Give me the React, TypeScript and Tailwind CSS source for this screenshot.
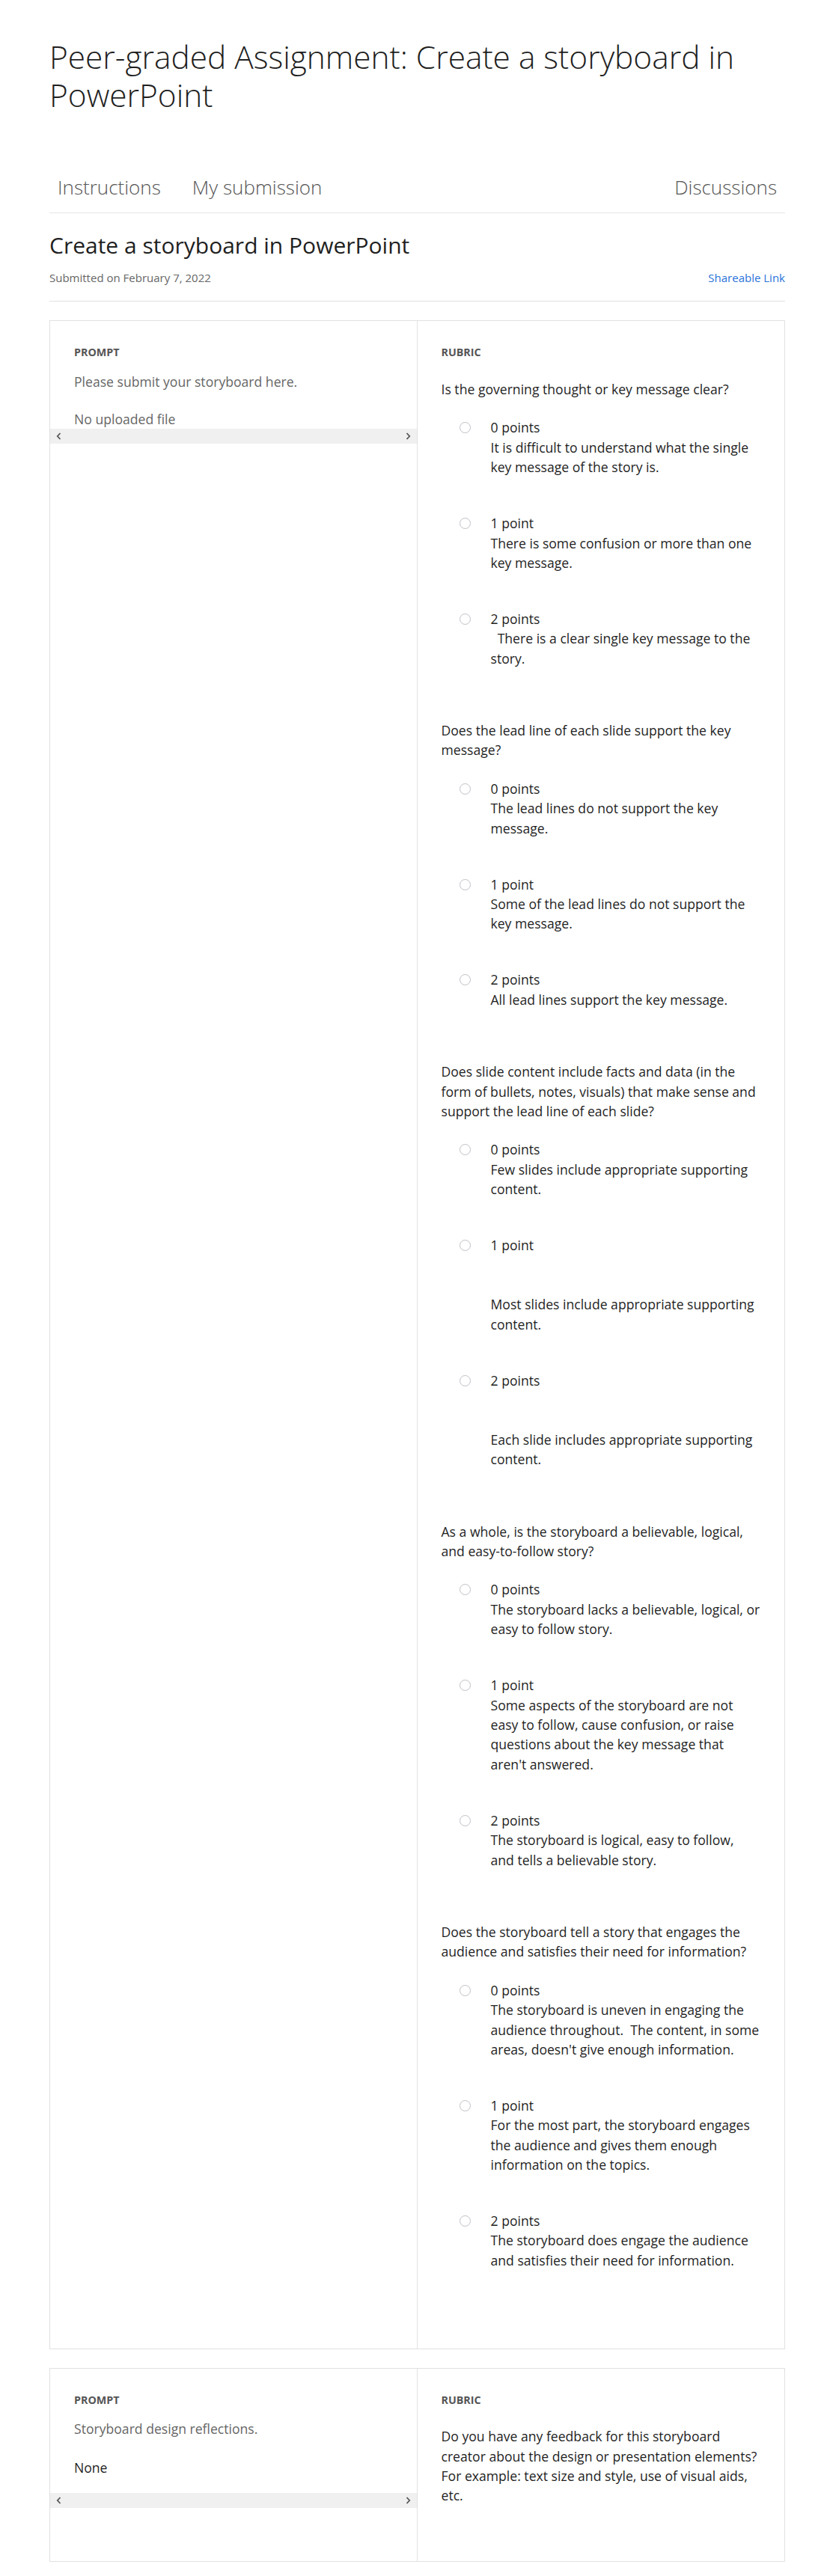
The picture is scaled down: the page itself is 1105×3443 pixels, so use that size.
import React from 'react';

type Option = { label: string; lines: string[] };
type Question = { title: string[]; options: Option[] };

const questions: Question[] = [
  {
    title: ['Is the governing thought or key message clear?'],
    options: [
      { label: '0 points', lines: ['It is difficult to understand what the single', 'key message of the story is.'] },
      { label: '1 point', lines: ['There is some confusion or more than one', 'key message.'] },
      { label: '2 points', lines: ['\u00a0\u00a0There is a clear single key message to the', 'story.'] },
    ],
  },
  {
    title: ['Does the lead line of each slide support the key', 'message?'],
    options: [
      { label: '0 points', lines: ['The lead lines do not support the key', 'message.'] },
      { label: '1 point', lines: ['Some of the lead lines do not support the', 'key message.'] },
      { label: '2 points', lines: ['All lead lines support the key message.'] },
    ],
  },
  {
    title: [
      'Does slide content include facts and data (in the',
      'form of bullets, notes, visuals) that make sense and',
      'support the lead line of each slide?',
    ],
    options: [
      { label: '0 points', lines: ['Few slides include appropriate supporting', 'content.'] },
      { label: '1 point', lines: ['', '', 'Most slides include appropriate supporting', 'content.'] },
      { label: '2 points', lines: ['', '', 'Each slide includes appropriate supporting', 'content.'] },
    ],
  },
  {
    title: ['As a whole, is the storyboard a believable, logical,', 'and easy-to-follow story?'],
    options: [
      { label: '0 points', lines: ['The storyboard lacks a believable, logical, or', 'easy to follow story.'] },
      {
        label: '1 point',
        lines: [
          'Some aspects of the storyboard are not',
          'easy to follow, cause confusion, or raise',
          'questions about the key message that',
          "aren't answered.",
        ],
      },
      { label: '2 points', lines: ['The storyboard is logical, easy to follow,', 'and tells a believable story.'] },
    ],
  },
  {
    title: ['Does the storyboard tell a story that engages the', 'audience and satisfies their need for information?'],
    options: [
      {
        label: '0 points',
        lines: [
          'The storyboard is uneven in engaging the',
          'audience throughout.\u00a0 The content, in some',
          "areas, doesn't give enough information.",
        ],
      },
      {
        label: '1 point',
        lines: ['For the most part, the storyboard engages', 'the audience and gives them enough', 'information on the topics.'],
      },
      { label: '2 points', lines: ['The storyboard does engage the audience', 'and satisfies their need for information.'] },
    ],
  },
];

function ScrollBand() {
  return (
    <div className="h-5 bg-[#f0f0f0] flex items-center justify-between px-2">
      <svg width="7" height="10" viewBox="0 0 7 10">
        <path d="M5.5 1 L1.8 5 L5.5 9" fill="none" stroke="#555" strokeWidth="1.8" />
      </svg>
      <svg width="7" height="10" viewBox="0 0 7 10">
        <path d="M1.5 1 L5.2 5 L1.5 9" fill="none" stroke="#555" strokeWidth="1.8" />
      </svg>
    </div>
  );
}

function Label({ children }: { children: React.ReactNode }) {
  return <div className="text-[14.3px] leading-5 font-bold text-[#555] uppercase">{children}</div>;
}

function RubricQuestion({ q }: { q: Question }) {
  return (
    <div className="flex flex-col gap-[25px]">
      <div className="text-[17.6px] leading-[26.4px] text-[#1f1f1f] whitespace-nowrap">
        {q.title.map((t, i) => (
          <div key={i}>{t}</div>
        ))}
      </div>
      <div className="flex flex-col gap-[48.5px]">
        {q.options.map((o, i) => (
          <div key={i} className="flex items-start pl-6">
            <span className="mt-[6px] w-[15px] h-[15px] shrink-0 rounded-full border-[1.5px] border-[#c0c0c8] bg-white" />
            <div className="ml-[27px] text-[17.6px] leading-[26.4px] text-[#1f1f1f] whitespace-nowrap">
              <div>{o.label}</div>
              {o.lines.map((l, j) => (
                <div key={j}>{l || '\u00a0'}</div>
              ))}
            </div>
          </div>
        ))}
      </div>
    </div>
  );
}

export default function App() {
  return (
    <div className="min-h-screen bg-white font-['Open_Sans',sans-serif] text-[#1f1f1f]">
      <div className="ml-[66px] w-[983px] pt-[50px] pb-[18px]">
        <h1 className="text-[42.4px] leading-[51px] font-light text-[#1f1f1f]">
          Peer-graded Assignment: Create a storyboard in PowerPoint
        </h1>

        <div className="mt-16 flex justify-between border-b border-[#e6e6e6]">
          <div className="flex gap-5">
            <span className="px-[11px] py-4 text-[26px] leading-9 font-light text-[#555]">Instructions</span>
            <span className="px-[11px] py-4 text-[26px] leading-9 font-light text-[#555]">My submission</span>
          </div>
          <span className="px-[11px] py-4 text-[26px] leading-9 font-light text-[#555]">Discussions</span>
        </div>

        <h2 className="mt-[25px] text-[30px] leading-9 text-[#1f1f1f]">Create a storyboard in PowerPoint</h2>
        <div className="mt-[15px] pb-[21px] flex justify-between text-[15px] leading-5 border-b border-[#e1e1e1]">
          <span className="text-[#666]">Submitted on February 7, 2022</span>
          <span className="text-[#2a73d9]">Shareable Link</span>
        </div>

        <div className="mt-[25px] grid grid-cols-2 border border-[#e1e1e1]">
          <div className="border-r border-[#e1e1e1]">
            <div className="px-8 pt-8">
              <Label>Prompt</Label>
              <p className="mt-4 text-[17.6px] leading-[26.4px] text-[#666]">Please submit your storyboard here.</p>
              <p className="mt-[23.6px] text-[17.6px] leading-[26.4px] text-[#666]">No uploaded file</p>
            </div>
            <ScrollBand />
          </div>
          <div className="px-8 pt-8 pb-[105px]">
            <Label>Rubric</Label>
            <div className="mt-[26px] flex flex-col gap-[70px]">
              {questions.map((q, i) => (
                <RubricQuestion key={i} q={q} />
              ))}
            </div>
          </div>
        </div>

        <div className="mt-[25px] grid grid-cols-2 border border-[#e1e1e1]">
          <div className="border-r border-[#e1e1e1]">
            <div className="px-8 pt-8 pb-5">
              <Label>Prompt</Label>
              <p className="mt-[15px] text-[17.6px] leading-[26.4px] text-[#666]">Storyboard design reflections.</p>
              <p className="mt-[25.6px] text-[17.6px] leading-[26.4px] text-[#1f1f1f]">None</p>
            </div>
            <ScrollBand />
          </div>
          <div className="px-8 pt-8 pb-[74px]">
            <Label>Rubric</Label>
            <div className="mt-[25px] text-[17.6px] leading-[26.4px] text-[#1f1f1f] whitespace-nowrap">
              <div>Do you have any feedback for this storyboard</div>
              <div>creator about the design or presentation elements?</div>
              <div>For example: text size and style, use of visual aids,</div>
              <div>etc.</div>
            </div>
          </div>
        </div>
      </div>
    </div>
  );
}
